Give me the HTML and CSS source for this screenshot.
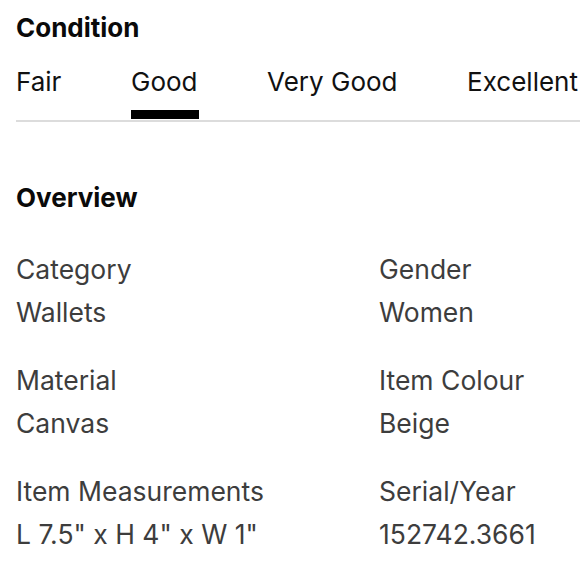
FILE: index.html
```html
<!DOCTYPE html>
<html>
<head>
<meta charset="utf-8">
<link rel="stylesheet" href="styles.css">
</head>
<body>
<div class="page">
  <h2 class="heading">Condition</h2>
  <div class="tabs">
    <div class="tab">Fair</div>
    <div class="tab active">Good</div>
    <div class="tab">Very Good</div>
    <div class="tab">Excellent</div>
  </div>
  <h2 class="heading overview">Overview</h2>
  <div class="grid">
    <div class="item"><div class="label">Category</div><div class="value">Wallets</div></div>
    <div class="item"><div class="label">Gender</div><div class="value">Women</div></div>
    <div class="item"><div class="label">Material</div><div class="value">Canvas</div></div>
    <div class="item"><div class="label">Item Colour</div><div class="value">Beige</div></div>
    <div class="item"><div class="label">Item Measurements</div><div class="value">L 7.5" x H 4" x W 1"</div></div>
    <div class="item"><div class="label">Serial/Year</div><div class="value">152742.3661</div></div>
  </div>
</div>
</body>
</html>
```
FILE: styles.css
```css
html, body { margin: 0; padding: 0; background: #fff; }
body { font-family: Inter, "Noto Sans", sans-serif; color: #111; }
.page { padding: 12px 0 0 16px; }
.heading { margin: 0; font-size: 26px; font-weight: 700; line-height: 32px; color: #0a0a0a; }
.tabs { display: flex; justify-content: space-between; margin-top: 22px; border-bottom: 2px solid #dcdcdc; padding-right: 2px; }
.tab { font-size: 26px; line-height: 32px; padding-bottom: 22px; color: #111; position: relative; }
.tab.active::after { content: ""; position: absolute; left: 0; right: -1px; bottom: 1px; height: 9px; background: #000; }
.overview { margin-top: 60px; }
.grid { display: grid; grid-template-columns: 363px 1fr; row-gap: 36px; margin-top: 39px; }
.label, .value { font-size: 26.5px; line-height: 32px; color: #3d3d3d; }
.value { margin-top: 11px; }
```
